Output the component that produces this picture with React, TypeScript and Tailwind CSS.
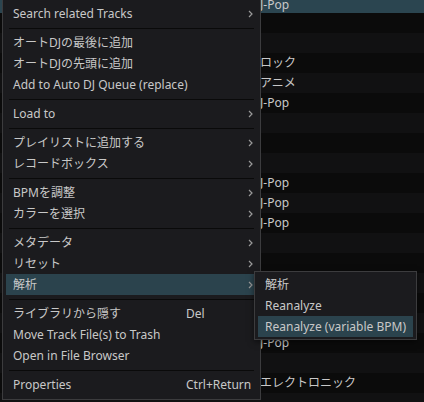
import React from "react";

type Item =
  | { sep: true }
  | { label: string; shortcut?: string; sub?: boolean; active?: boolean; blank?: boolean };

const menu: Item[] = [
  { label: "", blank: true },
  { label: "Search related Tracks", sub: true },
  { sep: true },
  { label: "オートDJの最後に追加" },
  { label: "オートDJの先頭に追加" },
  { label: "Add to Auto DJ Queue (replace)" },
  { sep: true },
  { label: "Load to", sub: true },
  { sep: true },
  { label: "プレイリストに追加する", sub: true },
  { label: "レコードボックス", sub: true },
  { sep: true },
  { label: "BPMを調整", sub: true },
  { label: "カラーを選択", sub: true },
  { sep: true },
  { label: "メタデータ", sub: true },
  { label: "リセット", sub: true },
  { label: "解析", sub: true, active: true },
  { sep: true },
  { label: "ライブラリから隠す", shortcut: "Del" },
  { label: "Move Track File(s) to Trash" },
  { label: "Open in File Browser" },
  { sep: true },
  { label: "Properties", shortcut: "Ctrl+Return" },
];

const rows: Record<number, string> = {
  0: "J-Pop",
  3: "ロック",
  4: "アニメ",
  5: "J-Pop",
  9: "J-Pop",
  10: "J-Pop",
  11: "J-Pop",
  17: "J-Pop",
  19: "エレクトロニック",
};

const font = { fontFamily: '"Noto Sans", "Noto Sans CJK JP", sans-serif' };

const Chevron = () => (
  <svg width="5" height="8" viewBox="0 0 5 8" className="text-[#9a9a9a]">
    <path d="M1 1 L4 4 L1 7" fill="none" stroke="currentColor" strokeWidth="1.2" />
  </svg>
);

export default function App() {
  return (
    <div
      className="relative w-[424px] h-[402px] overflow-hidden bg-[#0c0c0c] text-[12px] text-[#c8c8c8]"
      style={font}
    >
      {/* track list behind the menu */}
      <div className="flex flex-col -mt-[7px]">
        {Array.from({ length: 22 }).map((_, i) => (
          <div
            key={i}
            className={
              "h-[20px] flex items-center pl-[260px] " +
              (i === 0 ? "bg-[#2b4550] pt-[3px]" : i % 2 === 0 ? "bg-[#111112]" : "bg-[#0b0b0b]")
            }
          >
            {rows[i] ?? ""}
          </div>
        ))}
      </div>

      {/* main context menu */}
      <div className="absolute left-[2px] top-[-19px] w-[259px] bg-[#1b1b1e] border border-[#3c3c3e] px-[3px] pb-[4px] flex flex-col">
        {menu.map((m, i) =>
          "sep" in m ? (
            <div key={i} className="h-[8px] flex items-center px-[3px]">
              <div className="h-px w-full bg-[#0a0a0a]" />
            </div>
          ) : (
            <div
              key={i}
              className={
                "h-[21px] flex items-center pl-[7px] pr-[4px] " + (m.active ? "bg-[#2b434d]" : "")
              }
            >
              <span className="flex-1 whitespace-nowrap">{m.label}</span>
              <span className="w-[62px] whitespace-nowrap">{m.shortcut ?? ""}</span>
              <span className="w-[5px] flex items-center">{m.sub ? <Chevron /> : null}</span>
            </div>
          )
        )}
      </div>

      {/* submenu */}
      <div className="absolute left-[254px] top-[271px] w-[163px] bg-[#1b1b1e] border border-[#3c3c3e] px-[3px] py-[2px] flex flex-col shadow-[0_2px_6px_rgba(0,0,0,0.5)]">
        <div className="h-[21px] flex items-center pl-[7px]">解析</div>
        <div className="h-[21px] flex items-center pl-[7px]">Reanalyze</div>
        <div className="h-[21px] flex items-center pl-[7px] bg-[#2b434d] whitespace-nowrap">
          Reanalyze (variable BPM)
        </div>
      </div>
    </div>
  );
}
